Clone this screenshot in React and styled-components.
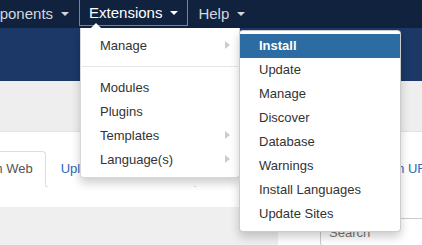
import styled, { createGlobalStyle } from "styled-components"

const GlobalStyle = createGlobalStyle`
  html, body {
    margin: 0;
    padding: 0;
    background: #fff;
    font-family: "Liberation Sans", Arial, sans-serif;
  }
`

const navItems = [
  { label: "Components" },
  { label: "Extensions", open: true },
  { label: "Help" },
]

const manageMenu = [
  { label: "Manage", sub: true },
  { divider: true },
  { label: "Modules" },
  { label: "Plugins" },
  { label: "Templates", sub: true },
  { label: "Language(s)", sub: true },
]

const subMenu = [
  "Install",
  "Update",
  "Manage",
  "Discover",
  "Database",
  "Warnings",
  "Install Languages",
  "Update Sites",
]

const tabs = ["Install from Web", "Upload Package File", "Install from Folder", "Install from URL"]

export default function App() {
  return (
    <>
      <GlobalStyle />
      <Page>
        <NavBar>
          <NavList>
            {navItems.map((item) => (
              <NavItem key={item.label} $open={item.open}>
                {item.label}
                <Caret />
              </NavItem>
            ))}
          </NavList>
        </NavBar>
        <Header />
        <SubHeader />
        <Content>
          <TabList>
            {tabs.map((t, i) => (
              <Tab key={t} $active={i === 0}>{t}</Tab>
            ))}
          </TabList>
        </Content>
        <Bottom>
          <GreyPane />
          <SidePane>
            <SearchBox placeholder="Search" />
          </SidePane>
        </Bottom>

        <Dropdown>
          {manageMenu.map((item, i) =>
            item.divider ? (
              <Divider key={i} />
            ) : (
              <MenuItem key={item.label}>
                {item.label}
                {item.sub && <SubArrow />}
              </MenuItem>
            )
          )}
        </Dropdown>

        <SubDropdown>
          {subMenu.map((label, i) => (
            <MenuItem key={label} $active={i === 0}>{label}</MenuItem>
          ))}
        </SubDropdown>
      </Page>
    </>
  )
}

const Page = styled.div`
  position: relative;
  width: 422px;
  height: 245px;
  overflow: hidden;
  background: #fff;
`

const NavBar = styled.div`
  height: 28px;
  background: #11223f;
  overflow: hidden;
`

const NavList = styled.div`
  display: flex;
  align-items: flex-start;
  margin-left: -42px;
  white-space: nowrap;
`

const NavItem = styled.div`
  display: flex;
  align-items: center;
  height: ${(p) => (p.$open ? "25px" : "27px")};
  padding: 0 ${(p) => (p.$open ? "9px" : "10px")};
  border: ${(p) => (p.$open ? "1px solid #4d8fcf" : "none")};
  border-top: none;
  font-size: 15px;
  color: ${(p) => (p.$open ? "#ffffff" : "#d4d8de")};
`

const Caret = styled.span`
  display: inline-block;
  margin-left: 8px;
  margin-top: 1px;
  width: 0;
  height: 0;
  border-left: 4px solid transparent;
  border-right: 4px solid transparent;
  border-top: 4px solid currentColor;
`

const Header = styled.div`
  height: 53px;
  background: #1b3867;
`

const SubHeader = styled.div`
  height: 50px;
  background: #eeeeee;
  border-bottom: 1px solid #e2e2e2;
`

const Content = styled.div`
  height: 75px;
  padding-top: 19px;
  box-sizing: border-box;
  background: #fff;
`

const TabList = styled.div`
  display: flex;
  margin-left: -74px;
  border-bottom: 1px solid #dddddd;
  white-space: nowrap;
`

const Tab = styled.div`
  padding: 8px 12px;
  margin-right: 2px;
  margin-bottom: -1px;
  line-height: 18px;
  font-size: 13px;
  color: ${(p) => (p.$active ? "#555555" : "#2a69b8")};
  background: #fff;
  border: 1px solid ${(p) => (p.$active ? "#dddddd" : "transparent")};
  border-bottom-color: ${(p) => (p.$active ? "#ffffff" : "transparent")};
  border-radius: 4px 4px 0 0;
`

const Bottom = styled.div`
  display: flex;
  height: 38px;
`

const GreyPane = styled.div`
  flex: 0 0 278px;
  background: #efefef;
`

const SidePane = styled.div`
  flex: 1;
  min-width: 0;
  padding: 11px 0 0 42px;
  background: #fff;
`

const SearchBox = styled.input`
  width: 140px;
  height: 28px;
  box-sizing: border-box;
  padding: 4px 8px;
  border: 1px solid #cccccc;
  border-radius: 3px;
  font-family: "Liberation Sans", Arial, sans-serif;
  font-size: 13px;
  color: #555;
  outline: none;
`

const Dropdown = styled.div`
  position: absolute;
  left: 80px;
  top: 28px;
  width: 160px;
  box-sizing: border-box;
  padding: 6px 0 5px;
  background: #fff;
  border: 1px solid rgba(0, 0, 0, 0.15);
  border-top: none;
  border-radius: 0 0 4px 4px;
  box-shadow: 0 5px 10px rgba(0, 0, 0, 0.2);
  z-index: 1;

  &::before {
    content: "";
    position: absolute;
    left: 10px;
    top: -5px;
    border-left: 5px solid transparent;
    border-right: 5px solid transparent;
    border-bottom: 5px solid #fff;
  }
`

const SubDropdown = styled.div`
  position: absolute;
  left: 239px;
  top: 30px;
  width: 162px;
  box-sizing: border-box;
  padding: 3px 0 5px;
  background: #fff;
  border: 1px solid rgba(0, 0, 0, 0.2);
  border-radius: 4px;
  box-shadow: 0 5px 10px rgba(0, 0, 0, 0.2);
  z-index: 2;
`

const MenuItem = styled.div`
  position: relative;
  height: 24px;
  line-height: 24px;
  padding: 0 19px;
  font-size: 13px;
  white-space: nowrap;
  font-weight: ${(p) => (p.$active ? "bold" : "normal")};
  color: ${(p) => (p.$active ? "#ffffff" : "#333333")};
  background: ${(p) => (p.$active ? "#2d6ca2" : "transparent")};
`

const SubArrow = styled.span`
  position: absolute;
  right: 9px;
  top: 7px;
  border-top: 4.5px solid transparent;
  border-bottom: 4.5px solid transparent;
  border-left: 5px solid #cccccc;
`

const Divider = styled.div`
  height: 1px;
  margin: 8px 1px 9px;
  background: #e5e5e5;
`
